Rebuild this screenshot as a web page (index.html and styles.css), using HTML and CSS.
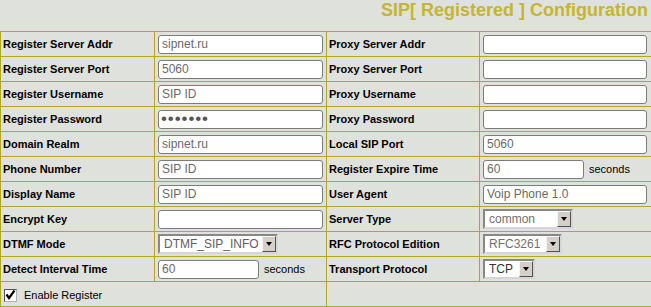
FILE: index.html
```html
<!DOCTYPE html>
<html>
<head>
    <meta charset="utf-8" />
    <meta name="viewport" content="width=device-width, initial-scale=1" />
    <title>SIP Configuration</title>
    <link rel="stylesheet" href="styles.css">
</head>
<body>
    <div class="title">SIP[ Registered ] Configuration</div>
    <table class="sip-table">
        <colgroup>
            <col class="col-a">
            <col class="col-b">
            <col class="col-c">
            <col class="col-d">
        </colgroup>
        <tr>
            <td class="label">Register Server Addr</td>
            <td class="cell"><input type="text" class="field" value="sipnet.ru"></td>
            <td class="label">Proxy Server Addr</td>
            <td class="cell"><input type="text" class="field field-r" value=""></td>
        </tr>
        <tr>
            <td class="label">Register Server Port</td>
            <td class="cell"><input type="text" class="field" value="5060"></td>
            <td class="label">Proxy Server Port</td>
            <td class="cell"><input type="text" class="field field-r" value=""></td>
        </tr>
        <tr>
            <td class="label">Register Username</td>
            <td class="cell"><input type="text" class="field" value="SIP ID"></td>
            <td class="label">Proxy Username</td>
            <td class="cell"><input type="text" class="field field-r" value=""></td>
        </tr>
        <tr>
            <td class="label">Register Password</td>
            <td class="cell"><input type="password" class="field field-pass" value="1234567"></td>
            <td class="label">Proxy Password</td>
            <td class="cell"><input type="password" class="field field-r" value=""></td>
        </tr>
        <tr>
            <td class="label">Domain Realm</td>
            <td class="cell"><input type="text" class="field" value="sipnet.ru"></td>
            <td class="label">Local SIP Port</td>
            <td class="cell"><input type="text" class="field field-r" value="5060"></td>
        </tr>
        <tr>
            <td class="label">Phone Number</td>
            <td class="cell"><input type="text" class="field" value="SIP ID"></td>
            <td class="label">Register Expire Time</td>
            <td class="cell"><input type="text" class="field field-short" value="60"><span class="unit">seconds</span></td>
        </tr>
        <tr>
            <td class="label">Display Name</td>
            <td class="cell"><input type="text" class="field" value="SIP ID"></td>
            <td class="label">User Agent</td>
            <td class="cell"><input type="text" class="field field-r" value="Voip Phone 1.0"></td>
        </tr>
        <tr>
            <td class="label">Encrypt Key</td>
            <td class="cell"><input type="text" class="field" value=""></td>
            <td class="label">Server Type</td>
            <td class="cell">
                <span class="combo combo-server">
                    <select><option>common</option></select>
                    <span class="combo-btn"></span>
                </span>
            </td>
        </tr>
        <tr>
            <td class="label">DTMF Mode</td>
            <td class="cell cell-dtmf">
                <span class="combo combo-dtmf">
                    <select><option>DTMF_SIP_INFO</option></select>
                    <span class="combo-btn"></span>
                </span>
            </td>
            <td class="label">RFC Protocol Edition</td>
            <td class="cell">
                <span class="combo combo-rfc">
                    <select><option>RFC3261</option></select>
                    <span class="combo-btn"></span>
                </span>
            </td>
        </tr>
        <tr>
            <td class="label">Detect Interval Time</td>
            <td class="cell"><input type="text" class="field field-short" value="60"><span class="unit">seconds</span></td>
            <td class="label">Transport Protocol</td>
            <td class="cell">
                <span class="combo combo-tcp">
                    <select><option>TCP</option></select>
                    <span class="combo-btn"></span>
                </span>
            </td>
        </tr>
        <tr>
            <td class="cell-check" colspan="2">
                <label class="check-label">
                    <span class="checkbox">
                        <svg width="11" height="11" viewBox="0 0 11 11">
                            <path d="M1.5 4.5 L4 8 L9.5 0.5" fill="none" stroke="#000" stroke-width="2.2"/>
                        </svg>
                    </span>
                    Enable Register
                </label>
            </td>
            <td colspan="2"></td>
        </tr>
    </table>
</body>
</html>
```

FILE: styles.css
```css
body {
    background-color: #dfe1dd;
    color: black;
    font-family: 'Liberation Sans', Arial, sans-serif;
    font-size: 11px;
    margin: 0;
}

.title {
    height: 31px;
    text-align: right;
    padding-right: 3px;
    font-size: 18px;
    font-weight: bold;
    line-height: 20px;
    color: #c6b52e;
    box-sizing: border-box;
}

.sip-table {
    width: 651px;
    border-collapse: collapse;
    table-layout: fixed;
    border: 1px solid #b4a720;
}

.col-a { width: 154px; }
.col-b { width: 172px; }
.col-c { width: 153px; }
.col-d { width: 172px; }

.sip-table td {
    border: 1px solid #b4a720;
    height: 24px;
    padding: 0 3px;
    vertical-align: middle;
    white-space: nowrap;
}

.sip-table td.label {
    font-weight: bold;
    padding-left: 2px;
}

.field {
    width: 165px;
    height: 19px;
    box-sizing: border-box;
    margin: 0;
    padding: 0 3px;
    border: 1px solid #7c7c7c;
    border-radius: 3px;
    background: white;
    font-family: 'Liberation Sans', Arial, sans-serif;
    font-size: 12px;
    color: #6a6a6a;
    vertical-align: middle;
}

.field-r {
    width: 164px;
}

.field-short {
    width: 101px;
}

.field-pass {
    font-size: 17px;
    letter-spacing: 0.9px;
    color: #555;
    padding-left: 2px;
}

.unit {
    margin-left: 5px;
    font-size: 11px;
    vertical-align: middle;
}

.combo {
    position: relative;
    display: inline-block;
    vertical-align: middle;
}

.combo select {
    appearance: none;
    -webkit-appearance: none;
    height: 20px;
    box-sizing: border-box;
    margin: 0;
    padding: 0 0 0 4px;
    border: 2px solid;
    border-color: #888 #d6d6d6 #d6d6d6 #888;
    border-radius: 0;
    background: white;
    font-family: 'Liberation Sans', Arial, sans-serif;
    font-size: 12px;
    color: #5e5e5e;
    display: block;
}

.combo-btn {
    position: absolute;
    top: 2px;
    right: 2px;
    width: 14px;
    height: 16px;
    box-sizing: border-box;
    background: #d4d0c8;
    border: 1px solid;
    border-color: #f4f4f4 #505050 #505050 #f4f4f4;
}

.combo-btn::after {
    content: "";
    position: absolute;
    left: 3px;
    top: 5px;
    border-left: 3.5px solid transparent;
    border-right: 3.5px solid transparent;
    border-top: 4px solid black;
}

.cell-dtmf {
    padding-left: 2px;
}

.combo-dtmf select { width: 120px; }
.combo-server select { width: 90px; color: #707070; }
.combo-rfc select { width: 79px; color: #707070; }
.combo-tcp select { width: 52px; color: #333; }

.cell-check {
    padding-left: 8px;
}

.check-label {
    display: flex;
    align-items: center;
    gap: 7px;
    font-size: 11px;
    padding-top: 2px;
}

.checkbox {
    width: 13px;
    height: 13px;
    box-sizing: border-box;
    border: 1px solid;
    border-color: #555 #b0b0b0 #b0b0b0 #555;
    background: white;
    display: flex;
    align-items: center;
    justify-content: center;
}
```
